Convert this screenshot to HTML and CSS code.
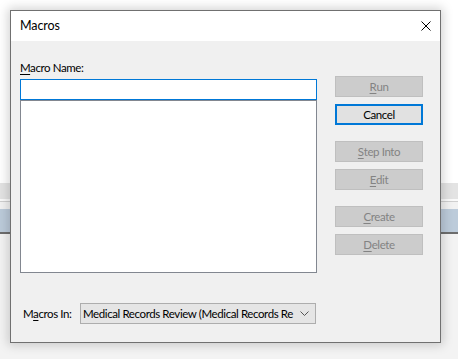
FILE: index.html
```html
<!DOCTYPE html>
<html>
<head>
<meta charset="utf-8">
<title>Macros</title>
<link rel="stylesheet" href="styles.css">
</head>
<body>
<div class="dialog">
  <div class="titlebar">
    <span class="title">Macros</span>
    <svg class="close" width="10" height="10" viewBox="0 0 10 10"><path d="M0.5 0.5 L9.5 9.5 M9.5 0.5 L0.5 9.5" stroke="#000" stroke-width="1" fill="none"/></svg>
  </div>
  <div class="content">
    <div class="main">
      <div class="left">
        <div class="label"><u>M</u>acro Name:</div>
        <div class="input"></div>
        <div class="list"></div>
      </div>
      <div class="buttons">
        <div class="btn disabled"><u>R</u>un</div>
        <div class="btn default">Cancel</div>
        <div class="btn disabled sep"><u>S</u>tep Into</div>
        <div class="btn disabled"><u>E</u>dit</div>
        <div class="btn disabled sep"><u>C</u>reate</div>
        <div class="btn disabled"><u>D</u>elete</div>
      </div>
    </div>
    <div class="footer">
      <div class="label">M<u>a</u>cros In:</div>
      <div class="select">
        <span class="select-text">Medical Records Review (Medical Records Re</span>
        <svg class="chev" width="9" height="5" viewBox="0 0 9 5"><path d="M0.5 0.5 L4.5 4.5 L8.5 0.5" stroke="#555" stroke-width="1" fill="none"/></svg>
      </div>
    </div>
  </div>
</div>
</body>
</html>
```
FILE: styles.css
```css
html, body {
  margin: 0;
  padding: 0;
}
body {
  width: 458px;
  height: 359px;
  overflow: hidden;
  font-family: Lato, "Noto Sans", sans-serif;
  font-size: 11.5px;
  letter-spacing: -0.4px;
  color: #000;
  background: linear-gradient(to bottom,
    #ffffff 0, #ffffff 183px,
    #e3e3e3 183px, #e3e3e3 199px,
    #fafafa 199px, #fafafa 201px,
    #cfcfcf 201px, #cfcfcf 202px,
    #f2f2f2 202px, #f2f2f2 209px,
    #bccbda 209px, #bccbda 232px,
    #6d6d6d 232px, #6d6d6d 234px,
    #f3f3f3 234px, #f3f3f3 100%);
  padding-top: 10px;
  padding-left: 10px;
  box-sizing: border-box;
}
.dialog {
  width: 431px;
  height: 333px;
  box-sizing: border-box;
  border: 1px solid #707070;
  background: #f0f0f0;
  box-shadow: 0 0 10px 2px rgba(0, 0, 0, 0.18);
  display: flex;
  flex-direction: column;
}
.titlebar {
  height: 30px;
  background: #fff;
  display: flex;
  align-items: center;
  justify-content: space-between;
  padding: 0 9px;
  flex: none;
}
.title {
  font-size: 12.5px;
  letter-spacing: -0.1px;
  position: relative;
  top: -1px;
}
.close {
  display: block;
}
.content {
  flex: 1;
  display: flex;
  flex-direction: column;
  padding: 0 16px 0 9px;
}
.main {
  display: flex;
  gap: 18px;
}
.left {
  width: 297px;
  padding-top: 19px;
  display: flex;
  flex-direction: column;
}
.label {
  line-height: 16px;
  height: 16px;
  white-space: nowrap;
}
.left .label {
  margin-bottom: 3px;
}
.input {
  height: 21px;
  box-sizing: border-box;
  border: 1px solid #0078d7;
  background: #fff;
}
.list {
  height: 173px;
  box-sizing: border-box;
  border: 1px solid #828790;
  background: #fff;
}
.buttons {
  width: 88px;
  padding-top: 35px;
  display: flex;
  flex-direction: column;
  gap: 7px;
}
.btn {
  height: 21px;
  box-sizing: border-box;
  display: flex;
  align-items: center;
  justify-content: center;
  line-height: 16px;
}
.btn.disabled {
  background: #cccccc;
  border: 1px solid #bfbfbf;
  color: #838383;
}
.btn.default {
  background: #e1e1e1;
  border: 2px solid #0078d7;
}
.btn.sep {
  margin-top: 9px;
}
u {
  text-decoration-thickness: 1px;
  text-underline-offset: 2px;
}
.footer {
  display: flex;
  align-items: center;
  margin-top: 30px;
  padding-left: 3px;
}
.footer .label {
  width: 57px;
}
.select {
  width: 236px;
  height: 21px;
  box-sizing: border-box;
  border: 1px solid #adadad;
  background: #e5e5e5;
  display: flex;
  align-items: center;
  padding: 0 6px 0 2px;
  gap: 6px;
}
.select-text {
  flex: 1;
  overflow: hidden;
  white-space: nowrap;
  line-height: 16px;
}
.chev {
  flex: none;
  display: block;
}
```
